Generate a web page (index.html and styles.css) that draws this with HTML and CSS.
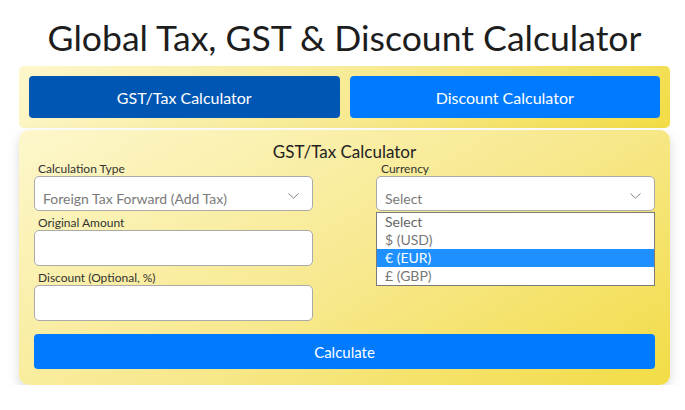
FILE: index.html
```html
<!DOCTYPE html>
<html lang="en">
<head>
<meta charset="utf-8">
<title>Global Tax, GST &amp; Discount Calculator</title>
<link rel="stylesheet" href="styles.css">
</head>
<body>
<div class="page">
  <h1 class="title">Global Tax, GST &amp; Discount Calculator</h1>
  <div class="tabs">
    <button class="tab tab-active">GST/Tax Calculator</button>
    <button class="tab">Discount Calculator</button>
  </div>
  <div class="card">
    <h2 class="card-title">GST/Tax Calculator</h2>
    <div class="grid">
      <div class="col">
        <label class="label">Calculation Type</label>
        <div class="select">
          <span class="select-text">Foreign Tax Forward (Add Tax)</span>
          <svg class="chev" width="11" height="6" viewBox="0 0 11 6"><path d="M0.5 0.5 L5.5 5.2 L10.5 0.5" fill="none" stroke="#808080" stroke-width="1"/></svg>
        </div>
        <label class="label">Original Amount</label>
        <div class="input"></div>
        <label class="label">Discount (Optional, %)</label>
        <div class="input"></div>
      </div>
      <div class="col">
        <label class="label label-r">Currency</label>
        <div class="select-wrap">
          <div class="select">
            <span class="select-text">Select</span>
            <svg class="chev" width="11" height="6" viewBox="0 0 11 6"><path d="M0.5 0.5 L5.5 5.2 L10.5 0.5" fill="none" stroke="#808080" stroke-width="1"/></svg>
          </div>
          <ul class="dropdown">
            <li class="opt">Select</li>
            <li class="opt">$ (USD)</li>
            <li class="opt opt-sel">€ (EUR)</li>
            <li class="opt">£ (GBP)</li>
          </ul>
        </div>
      </div>
    </div>
    <button class="calc">Calculate</button>
  </div>
</div>
</body>
</html>
```
FILE: styles.css
```css
* { box-sizing: border-box; }
body {
  margin: 0;
  background: #fff;
  font-family: Lato, "Open Sans", sans-serif;
  color: #222;
}
.page {
  padding: 0 15px 0 19px;
}
.title {
  margin: 0;
  padding-top: 16px;
  height: 66px;
  font-weight: 400;
  font-size: 35.6px;
  line-height: 44px;
  text-align: center;
  color: #1d1d1d;
}
.tabs {
  display: flex;
  gap: 10px;
  padding: 10px;
  border-radius: 5px;
  background: linear-gradient(135deg, #fdf7cc 0%, #f7e98e 55%, #f2dc45 100%);
}
.tab {
  flex: 1;
  height: 42px;
  border: none;
  border-radius: 4px;
  background: #007bff;
  color: #fff;
  font-family: Lato, sans-serif;
  font-size: 16px;
  padding: 0;
}
.tab-active { background: #0056b3; }
.card {
  margin-top: 2px;
  height: 255px;
  border-radius: 10px;
  padding: 12px 15px 0 15px;
  background: linear-gradient(150deg, #fdf7cc 0%, #f7e88c 55%, #f2dc45 100%);
  box-shadow: 0 5px 12px rgba(0,0,0,0.15);
}
.card-title {
  margin: 0;
  font-weight: 400;
  font-size: 17px;
  line-height: 20px;
  text-align: center;
  color: #222;
}
.grid {
  display: grid;
  grid-template-columns: 279px 279px;
  justify-content: space-between;
  margin-top: -1px;
}
.col { display: flex; flex-direction: column; }
.label {
  display: block;
  margin-left: 4px;
  font-size: 12px;
  line-height: 15px;
  color: #333;
}
.label-r { margin-left: 5px; }
.select, .input {
  background: #fff;
  border: 1px solid #aaa;
  border-radius: 5px;
}
.select { height: 35px; }
.input { height: 36px; margin-bottom: 4px; }
.select {
  display: flex;
  justify-content: space-between;
  align-items: flex-start;
  padding: 13px 13px 0 8px;
  margin-bottom: 4px;
}
.select-text {
  font-size: 14px;
  line-height: 17px;
  color: #7a7a7a;
}
.chev { margin-top: 3px; }
.select-wrap { position: relative; }
.dropdown {
  position: absolute;
  left: 0;
  right: 0;
  top: 36px;
  margin: 0;
  padding: 0;
  list-style: none;
  background: #fff;
  border: 1px solid #7a7a7a;
}
.opt {
  height: 18px;
  line-height: 18px;
  padding-left: 8px;
  font-size: 14px;
  color: #777;
}
.opt:first-child { color: #666; }
.opt-sel { background: #1e90ff; color: #fff; }
.calc {
  display: block;
  width: 100%;
  margin-top: 9px;
  height: 35px;
  border: none;
  border-radius: 4px;
  background: #007bff;
  color: #fff;
  font-family: Lato, sans-serif;
  font-size: 15px;
}
```
